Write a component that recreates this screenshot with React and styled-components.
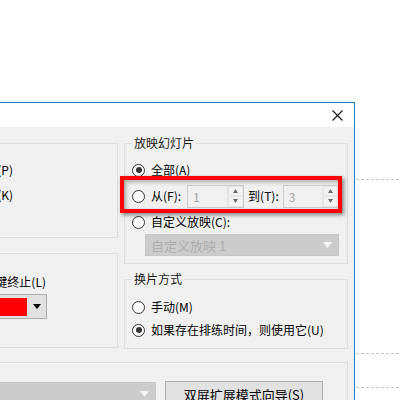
import React from "react";
import styled, { createGlobalStyle } from "styled-components";

const Global = createGlobalStyle`
  html, body { margin: 0; padding: 0; background: #ffffff; }
  body { width: 400px; height: 400px; overflow: hidden;
    font-family: "Noto Sans CJK SC", "Noto Sans", "Liberation Sans", sans-serif; font-size: 12px; color: #000; }
`;

const Page = styled.div`
  display: flex;
  width: 400px;
  height: 400px;
  overflow: hidden;
`;

const Dialog = styled.div`
  flex-shrink: 0;
  box-sizing: border-box;
  margin-top: 102px;
  margin-left: -200px;
  width: 555px;
  height: 320px;
  border-top: 1px solid #1883d7;
  border-right: 1px solid #1883d7;
  display: flex;
  flex-direction: column;
`;

const TitleBar = styled.div`
  height: 24px;
  background: #ffffff;
  display: flex;
  align-items: center;
  justify-content: flex-end;
  padding-right: 11px;
`;

const Body = styled.div`
  flex: 1;
  background: #f0f0f0;
  padding: 16px 6px 0 0;
  display: flex;
  flex-direction: column;
`;

const Columns = styled.div`
  display: flex;
  gap: 6px;
`;

const Column = styled.div`
  display: flex;
  flex-direction: column;
  gap: 15px;
  width: ${(p) => p.$w}px;
`;

const Group = styled.div`
  position: relative;
  box-sizing: border-box;
  border: 1px solid #dcdcdc;
  height: ${(p) => p.$h}px;
  display: flex;
  flex-direction: column;
`;

const Legend = styled.div`
  align-self: flex-start;
  margin: -9px 0 0 7px;
  padding: 0 2px;
  line-height: 16px;
  background: #f0f0f0;
  color: #1a1a1a;
`;

const Rows = styled.div`
  display: flex;
  flex-direction: column;
  gap: ${(p) => p.$gap}px;
  padding-top: ${(p) => p.$top}px;
`;

const Row = styled.div`
  display: flex;
  align-items: center;
  height: 22px;
  padding-left: 7px;
`;

const EndRow = styled.div`
  display: flex;
  align-items: center;
  justify-content: flex-end;
  height: ${(p) => p.$h || 22}px;
  padding-right: ${(p) => p.$pr}px;
  white-space: nowrap;
`;

const Radio = styled.span`
  box-sizing: border-box;
  width: 13px;
  height: 13px;
  border-radius: 50%;
  border: 1px solid #333;
  background: #fff;
  display: inline-flex;
  align-items: center;
  justify-content: center;
  margin-right: 6px;
  flex-shrink: 0;
  &::after {
    content: "";
    width: 6px;
    height: 6px;
    border-radius: 50%;
    background: ${(p) => (p.$on ? "#333" : "transparent")};
  }
`;

const Label = styled.span`
  line-height: 16px;
  white-space: nowrap;
  margin-right: ${(p) => p.$mr || 0}px;
`;

const Spin = styled.div`
  box-sizing: border-box;
  width: ${(p) => p.$w}px;
  height: 23px;
  border: 1px solid #cccccc;
  background: #f0f0f0;
  display: flex;
  margin-right: ${(p) => p.$mr || 0}px;
`;

const SpinValue = styled.div`
  flex: 1;
  padding-left: 5px;
  line-height: 21px;
  color: #a3a3a3;
`;

const SpinButtons = styled.div`
  width: 15px;
  display: flex;
  flex-direction: column;
  border-left: 1px solid #e3e3e3;
`;

const SpinBtn = styled.div`
  flex: 1;
  display: flex;
  align-items: center;
  justify-content: center;
  border: 1px solid #e6e6e6;
  background: #f2f2f2;
`;

const Tri = ({ up, color = "#6a6a6a", w = 5 }) => (
  <svg width={w} height={Math.ceil(w / 2) + 1} viewBox={`0 0 ${w} ${Math.ceil(w / 2) + 1}`}>
    {up ? (
      <polygon points={`0,${Math.ceil(w / 2) + 1} ${w / 2},0 ${w},${Math.ceil(w / 2) + 1}`} fill={color} />
    ) : (
      <polygon points={`0,0 ${w},0 ${w / 2},${Math.ceil(w / 2) + 1}`} fill={color} />
    )}
  </svg>
);

const DisabledSelect = styled.div`
  box-sizing: border-box;
  height: ${(p) => p.$h || 22}px;
  width: ${(p) => (p.$w ? `${p.$w}px` : "auto")};
  flex: ${(p) => (p.$w ? "none" : 1)};
  margin-left: ${(p) => p.$ml || 0}px;
  background: #cccccc;
  border: 1px solid #c6c6c6;
  color: #adadad;
  display: flex;
  align-items: center;
  justify-content: space-between;
  padding: 0 6px 0 5px;
  font-size: 13px;
`;

const ColorSelect = styled.div`
  box-sizing: border-box;
  width: 150px;
  height: 25px;
  border: 1px solid #adadad;
  background: #e1e1e1;
  display: flex;
  align-items: center;
  padding: 0 5px 0 3px;
  gap: 6px;
`;

const Swatch = styled.div`
  flex: 1;
  height: 18px;
  background: #ff0000;
`;

const BottomGroup = styled.div`
  box-sizing: border-box;
  margin-top: 13px;
  border-top: 1px solid #dcdcdc;
  border-right: 1px solid #dcdcdc;
  padding: 19px 24px 0 0;
  display: flex;
  gap: 9px;
  flex: 1;
`;

const Button = styled.div`
  box-sizing: border-box;
  width: 158px;
  height: 26px;
  margin-top: -1px;
  border: 1px solid #adadad;
  background: #e1e1e1;
  display: flex;
  align-items: center;
  justify-content: center;
  font-size: 13px;
  white-space: nowrap;
`;

const Highlight = styled.div`
  position: absolute;
  left: -5px;
  top: 32px;
  width: 222px;
  height: 37px;
  box-sizing: border-box;
  border: 4px solid #ff0000;
  box-shadow: 2px 2px 4px rgba(0, 0, 0, 0.45), inset 2px 2px 4px rgba(0, 0, 0, 0.3);
  pointer-events: none;
`;

const Side = styled.div`
  flex: 1;
  display: flex;
  flex-direction: column;
  padding: 179px 0 0 1px;
`;

const Dashed = styled.div`
  height: 1px;
  margin-top: ${(p) => p.$mt || 0}px;
  background: repeating-linear-gradient(to right, #c4c4c4 0 3px, transparent 3px 5px);
`;

const CloseIcon = () => (
  <svg width="11" height="11" viewBox="0 0 11 11">
    <path d="M0.5 0.5 L10.5 10.5 M10.5 0.5 L0.5 10.5" stroke="#111" strokeWidth="1.1" fill="none" />
  </svg>
);

export default function App() {
  return (
    <Page>
      <Global />
      <Dialog>
        <TitleBar>
          <CloseIcon />
        </TitleBar>
        <Body>
          <Columns>
            <Column $w={318}>
              <Group $h={95}>
                <Legend>放映类型</Legend>
                <Rows $gap={3} $top={8}>
                  <EndRow $pr={104}>
                    <Radio $on />
                    <Label>演讲者放映(全屏幕)(P)</Label>
                  </EndRow>
                  <EndRow $pr={104}>
                    <Radio />
                    <Label>在展台浏览(全屏幕)(K)</Label>
                  </EndRow>
                </Rows>
              </Group>
              <Group $h={95}>
                <Legend>放映选项</Legend>
                <Rows $gap={1} $top={10}>
                  <EndRow $pr={71}>
                    <Label>循环放映，按ESC键终止(L)</Label>
                  </EndRow>
                  <EndRow $pr={70} $h={25}>
                    <ColorSelect>
                      <Swatch />
                      <Tri color="#000" w={8} />
                    </ColorSelect>
                  </EndRow>
                </Rows>
              </Group>
            </Column>
            <Column $w={224}>
              <Group $h={121}>
                <Legend>放映幻灯片</Legend>
                <Rows $gap={4} $top={8}>
                  <Row>
                    <Radio $on />
                    <Label>全部(A)</Label>
                  </Row>
                  <Row>
                    <Radio />
                    <Label $mr={6}>从(F):</Label>
                    <Spin $w={57} $mr={4}>
                      <SpinValue>1</SpinValue>
                      <SpinButtons>
                        <SpinBtn><Tri up /></SpinBtn>
                        <SpinBtn><Tri /></SpinBtn>
                      </SpinButtons>
                    </Spin>
                    <Label $mr={4}>到(T):</Label>
                    <Spin $w={56}>
                      <SpinValue>3</SpinValue>
                      <SpinButtons>
                        <SpinBtn><Tri up /></SpinBtn>
                        <SpinBtn><Tri /></SpinBtn>
                      </SpinButtons>
                    </Spin>
                  </Row>
                  <Row>
                    <Radio />
                    <Label>自定义放映(C):</Label>
                  </Row>
                </Rows>
                <DisabledSelect $w={194} $ml={20} style={{ marginTop: 1 }}>
                  <span>自定义放映 1</span>
                  <Tri color="#f4f4f4" w={9} />
                </DisabledSelect>
                <Highlight />
              </Group>
              <Group $h={70}>
                <Legend>换片方式</Legend>
                <Rows $gap={1} $top={9}>
                  <Row>
                    <Radio />
                    <Label>手动(M)</Label>
                  </Row>
                  <Row>
                    <Radio $on />
                    <Label>如果存在排练时间，则使用它(U)</Label>
                  </Row>
                </Rows>
              </Group>
            </Column>
          </Columns>
          <BottomGroup>
            <DisabledSelect $h={24}>
              <span></span>
              <Tri color="#f4f4f4" w={9} />
            </DisabledSelect>
            <Button>双屏扩展模式向导(S)</Button>
          </BottomGroup>
        </Body>
      </Dialog>
      <Side>
        <Dashed />
        <Dashed $mt={173} />
        <Dashed $mt={33} />
      </Side>
    </Page>
  );
}
